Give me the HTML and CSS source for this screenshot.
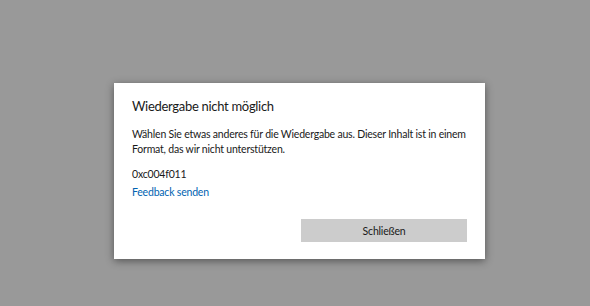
FILE: index.html
```html
<!DOCTYPE html>
<html lang="de">
<head>
  <meta charset="UTF-8">
  <title>Wiedergabe nicht möglich</title>
  <link rel="stylesheet" href="styles.css">
</head>
<body>
  <div class="dialog">
    <h1 class="title">Wiedergabe nicht möglich</h1>
    <p class="message">Wählen Sie etwas anderes für die Wiedergabe aus. Dieser Inhalt ist in einem Format, das wir nicht unterstützen.</p>
    <p class="code">0xc004f011</p>
    <a class="feedback" href="#">Feedback senden</a>
    <div class="actions">
      <button class="close">Schließen</button>
    </div>
  </div>
</body>
</html>
```

FILE: styles.css
```css
body {
  margin: 0;
  height: 306px;
  background-color: #999999;
  font-family: Lato, "Noto Sans", sans-serif;
  color: #000000;
}
.dialog {
  position: relative;
  top: 83px;
  left: 114px;
  width: 371px;
  height: 176px;
  box-sizing: border-box;
  padding: 14px 18px 0 18px;
  background-color: #ffffff;
  box-shadow: 0 2px 8px rgba(0, 0, 0, 0.45);
}
.title {
  margin: 0;
  font-size: 13px;
  letter-spacing: -0.3px;
  font-weight: normal;
  line-height: 18px;
  color: #1a1a1a;
}
.message {
  margin: 12px 0 0 0;
  font-size: 10.5px;
  letter-spacing: -0.2px;
  line-height: 15px;
  color: #1a1a1a;
}
.code {
  margin: 9px 0 0 0;
  font-size: 10.5px;
  letter-spacing: -0.2px;
  line-height: 16px;
  color: #1a1a1a;
}
.feedback {
  display: block;
  margin-top: 2px;
  font-size: 10.5px;
  letter-spacing: -0.2px;
  line-height: 16px;
  color: #0063b1;
  text-decoration: none;
}
.actions {
  display: flex;
  justify-content: flex-end;
  margin-top: 19px;
}
.close {
  width: 166px;
  height: 23px;
  border: none;
  background-color: #cccccc;
  font-family: inherit;
  font-size: 10.5px;
  letter-spacing: -0.2px;
  color: #1a1a1a;
}
```
